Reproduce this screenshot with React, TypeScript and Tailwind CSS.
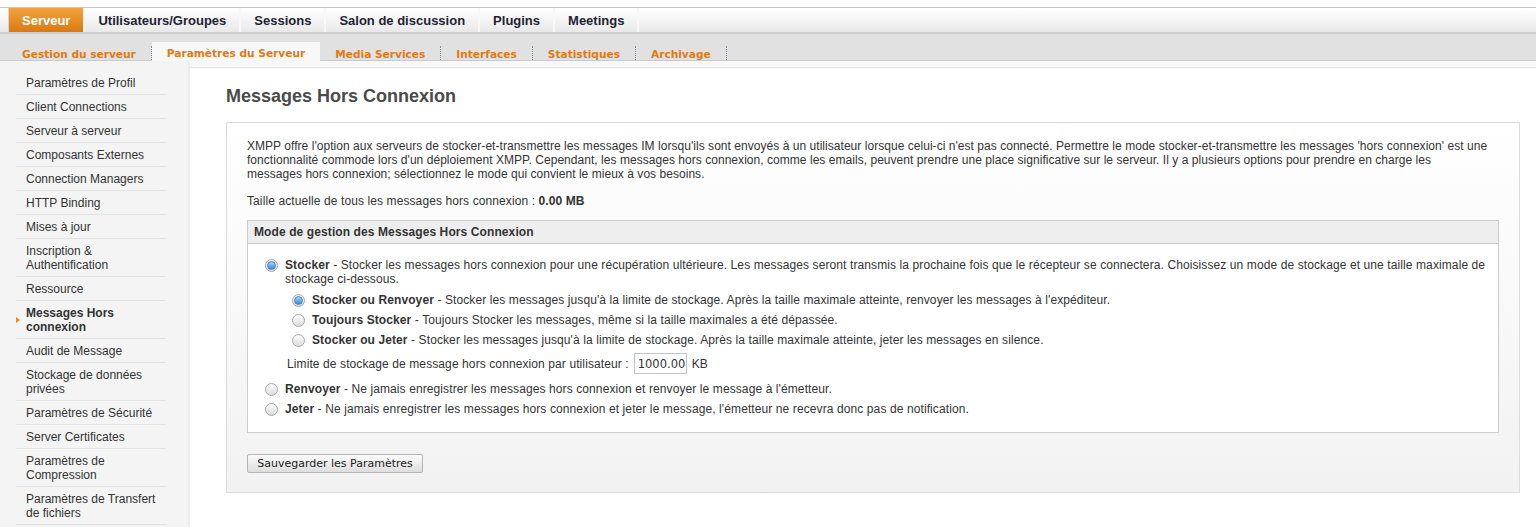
import React from "react";

const mainTabs = ["Serveur", "Utilisateurs/Groupes", "Sessions", "Salon de discussion", "Plugins", "Meetings"];
const subTabs = ["Gestion du serveur", "Paramètres du Serveur", "Media Services", "Interfaces", "Statistiques", "Archivage"];

const sideItems = [
  "Paramètres de Profil",
  "Client Connections",
  "Serveur à serveur",
  "Composants Externes",
  "Connection Managers",
  "HTTP Binding",
  "Mises à jour",
  "Inscription & Authentification",
  "Ressource",
  "Messages Hors connexion",
  "Audit de Message",
  "Stockage de données privées",
  "Paramètres de Sécurité",
  "Server Certificates",
  "Paramètres de Compression",
  "Paramètres de Transfert de fichiers",
];

function Radio({ checked }: { checked?: boolean }) {
  return (
    <span className="relative flex h-[13px] w-[13px] shrink-0 items-center justify-center rounded-full border border-[#a8a8a8] bg-gradient-to-b from-[#fdfdfd] to-[#dcdcdc]">
      {checked && (
        <span className="h-[9px] w-[9px] rounded-full border border-[#4a86c8] bg-gradient-to-b from-[#a8d0f8] to-[#3b86dc]" />
      )}
    </span>
  );
}

function Option({
  checked,
  title,
  desc,
}: {
  checked?: boolean;
  title: string;
  desc: string;
}) {
  return (
    <div className="flex items-start gap-[7px]">
      <span className="flex h-[14px] items-center pt-[1px]">
        <Radio checked={checked} />
      </span>
      <p>
        <b>{title}</b> - {desc}
      </p>
    </div>
  );
}

export default function App() {
  return (
    <div
      className="h-[527px] overflow-hidden bg-white text-[12px] leading-[14px] text-[#333]"
      style={{ fontFamily: '"Liberation Sans", Arial, sans-serif' }}
    >
      {/* main tabs */}
      <div className="mt-[7px] flex h-[27px] border-t border-b-2 border-t-[#c8c8c8] border-b-[#cfcfcf] bg-gradient-to-b from-white to-[#e9e9e9] pl-[8px]">
        {mainTabs.map((t, i) => (
          <div
            key={t}
            className={
              i === 0
                ? "flex items-center border-l border-[#d6d6d6] bg-gradient-to-b from-[#f2a33a] to-[#d97a0e] px-[13px] pt-[1px] text-[13px] font-bold text-white"
                : "flex items-center border-l-2 border-[#f8f8f8] px-[13px] pt-[1px] text-[13px] font-bold text-[#1f2333]"
            }
          >
            {t}
          </div>
        ))}
        <div className="border-l-2 border-[#f8f8f8]" />
      </div>

      {/* sub tabs */}
      <div
        className="flex h-[27px] items-end border-b border-[#cbcbcb] bg-[#e1e1e1] pl-[7px]"
        style={{ fontFamily: '"DejaVu Sans", Verdana, sans-serif' }}
      >
        {subTabs.map((t, i) => (
          <div
            key={t}
            className={
              i === 1
                ? "-mb-[1px] flex h-[19px] items-center bg-[#f8f8f8] px-[15px] pt-[3px] text-[10.6px] font-bold text-[#e07b14]"
                : "flex h-[14px] items-center border-r border-dotted border-[#7d8c99] px-[15px] pt-[2px] text-[10.6px] font-bold text-[#e07b14]"
            }
          >
            {t}
          </div>
        ))}
      </div>

      <div className="flex">
        {/* sidebar */}
        <div className="w-[190px] shrink-0 border-r-2 border-[#ececec] bg-[#f4f4f4] pt-[10px]">
          <ul className="ml-[16px] w-[150px]">
            {sideItems.map((s) => {
              const active = s === "Messages Hors connexion";
              return (
                <li
                  key={s}
                  className={
                    "relative border-b border-[#e2e2e2] pt-[5px] pb-[4px] pl-[10px] pr-[4px] " +
                    (active ? "font-bold" : "")
                  }
                >
                  {active && (
                    <span className="absolute left-0 top-1/2 -translate-y-1/2 border-y-[3px] border-l-[4px] border-y-transparent border-l-[#e8901c]" />
                  )}
                  {s}
                </li>
              );
            })}
          </ul>
        </div>

        {/* content */}
        <div className="flex-1 bg-[#f8f8f8] pt-[6px]">
          <div className="border-t border-[#e3e3e3] bg-white pb-[40px] pl-[36px] pr-[16px]">
            <h1 className="pt-[18px] pb-[16px] text-[18px] font-bold leading-[20px] text-[#4a4a4a]">
              Messages Hors Connexion
            </h1>
            <div className="border border-[#dcdcdc] bg-gradient-to-b from-white to-[#f2f2f2] px-[20px] pt-[16px] pb-[19px] tracking-[0.1px]">
              <p className="-mr-[12px] tracking-[0.04px]">
                XMPP offre l'option aux serveurs de stocker-et-transmettre les messages IM lorsqu'ils sont envoyés à un
                utilisateur lorsque celui-ci n'est pas connecté. Permettre le mode stocker-et-transmettre les messages
                'hors connexion' est une
                <br />
                fonctionnalité commode lors d'un déploiement XMPP. Cependant, les messages hors connexion, comme les
                emails, peuvent prendre une place significative sur le serveur. Il y a plusieurs options pour prendre en
                charge les
                <br />
                messages hors connexion; sélectionnez le mode qui convient le mieux à vos besoins.
              </p>
              <p className="mt-[13px]">
                Taille actuelle de tous les messages hors connexion : <b>0.00 MB</b>
              </p>

              <div className="mt-[12px] border border-[#cccccc] bg-white">
                <div className="border-b border-[#cccccc] bg-[#eeeeee] px-[6px] py-[4px] font-bold">
                  Mode de gestion des Messages Hors Connexion
                </div>
                <div className="pl-[17px] pr-[12px] pt-[14px] pb-[16px]">
                  <Option
                    checked
                    title="Stocker"
                    desc="Stocker les messages hors connexion pour une récupération ultérieure. Les messages seront transmis la prochaine fois que le récepteur se connectera. Choisissez un mode de stockage et une taille maximale de stockage ci-dessous."
                  />
                  <div className="mt-[7px] flex flex-col gap-[6px] pl-[27px]">
                    <Option
                      checked
                      title="Stocker ou Renvoyer"
                      desc="Stocker les messages jusqu'à la limite de stockage. Après la taille maximale atteinte, renvoyer les messages à l'expéditeur."
                    />
                    <Option
                      title="Toujours Stocker"
                      desc="Toujours Stocker les messages, même si la taille maximales a été dépassée."
                    />
                    <Option
                      title="Stocker ou Jeter"
                      desc="Stocker les messages jusqu'à la limite de stockage. Après la taille maximale atteinte, jeter les messages en silence."
                    />
                  </div>
                  <div className="mt-[6px] flex items-center gap-[5px] pl-[22px]">
                    <span>Limite de stockage de message hors connexion par utilisateur :</span>
                    <span
                      className="flex h-[21px] w-[53px] items-center border border-[#c4c4c4] bg-white pl-[3px] text-[11.5px] tracking-normal"
                      style={{ fontFamily: '"DejaVu Sans", Verdana, sans-serif' }}
                    >
                      1000.00
                    </span>
                    <span>KB</span>
                  </div>
                  <div className="mt-[8px] flex flex-col gap-[6px]">
                    <Option
                      title="Renvoyer"
                      desc="Ne jamais enregistrer les messages hors connexion et renvoyer le message à l'émetteur."
                    />
                    <Option
                      title="Jeter"
                      desc="Ne jamais enregistrer les messages hors connexion et jeter le message, l'émetteur ne recevra donc pas de notification."
                    />
                  </div>
                </div>
              </div>

              <button
                type="button"
                className="mt-[21px] h-[19px] w-[176px] rounded-[2px] border border-[#b4b4b4] bg-gradient-to-b from-[#fbfbfb] to-[#dedede] text-[11px] leading-[16px] tracking-normal text-[#222]"
                style={{ fontFamily: '"DejaVu Sans", Verdana, sans-serif' }}
              >
                Sauvegarder les Paramètres
              </button>
            </div>
          </div>
        </div>
      </div>
    </div>
  );
}
